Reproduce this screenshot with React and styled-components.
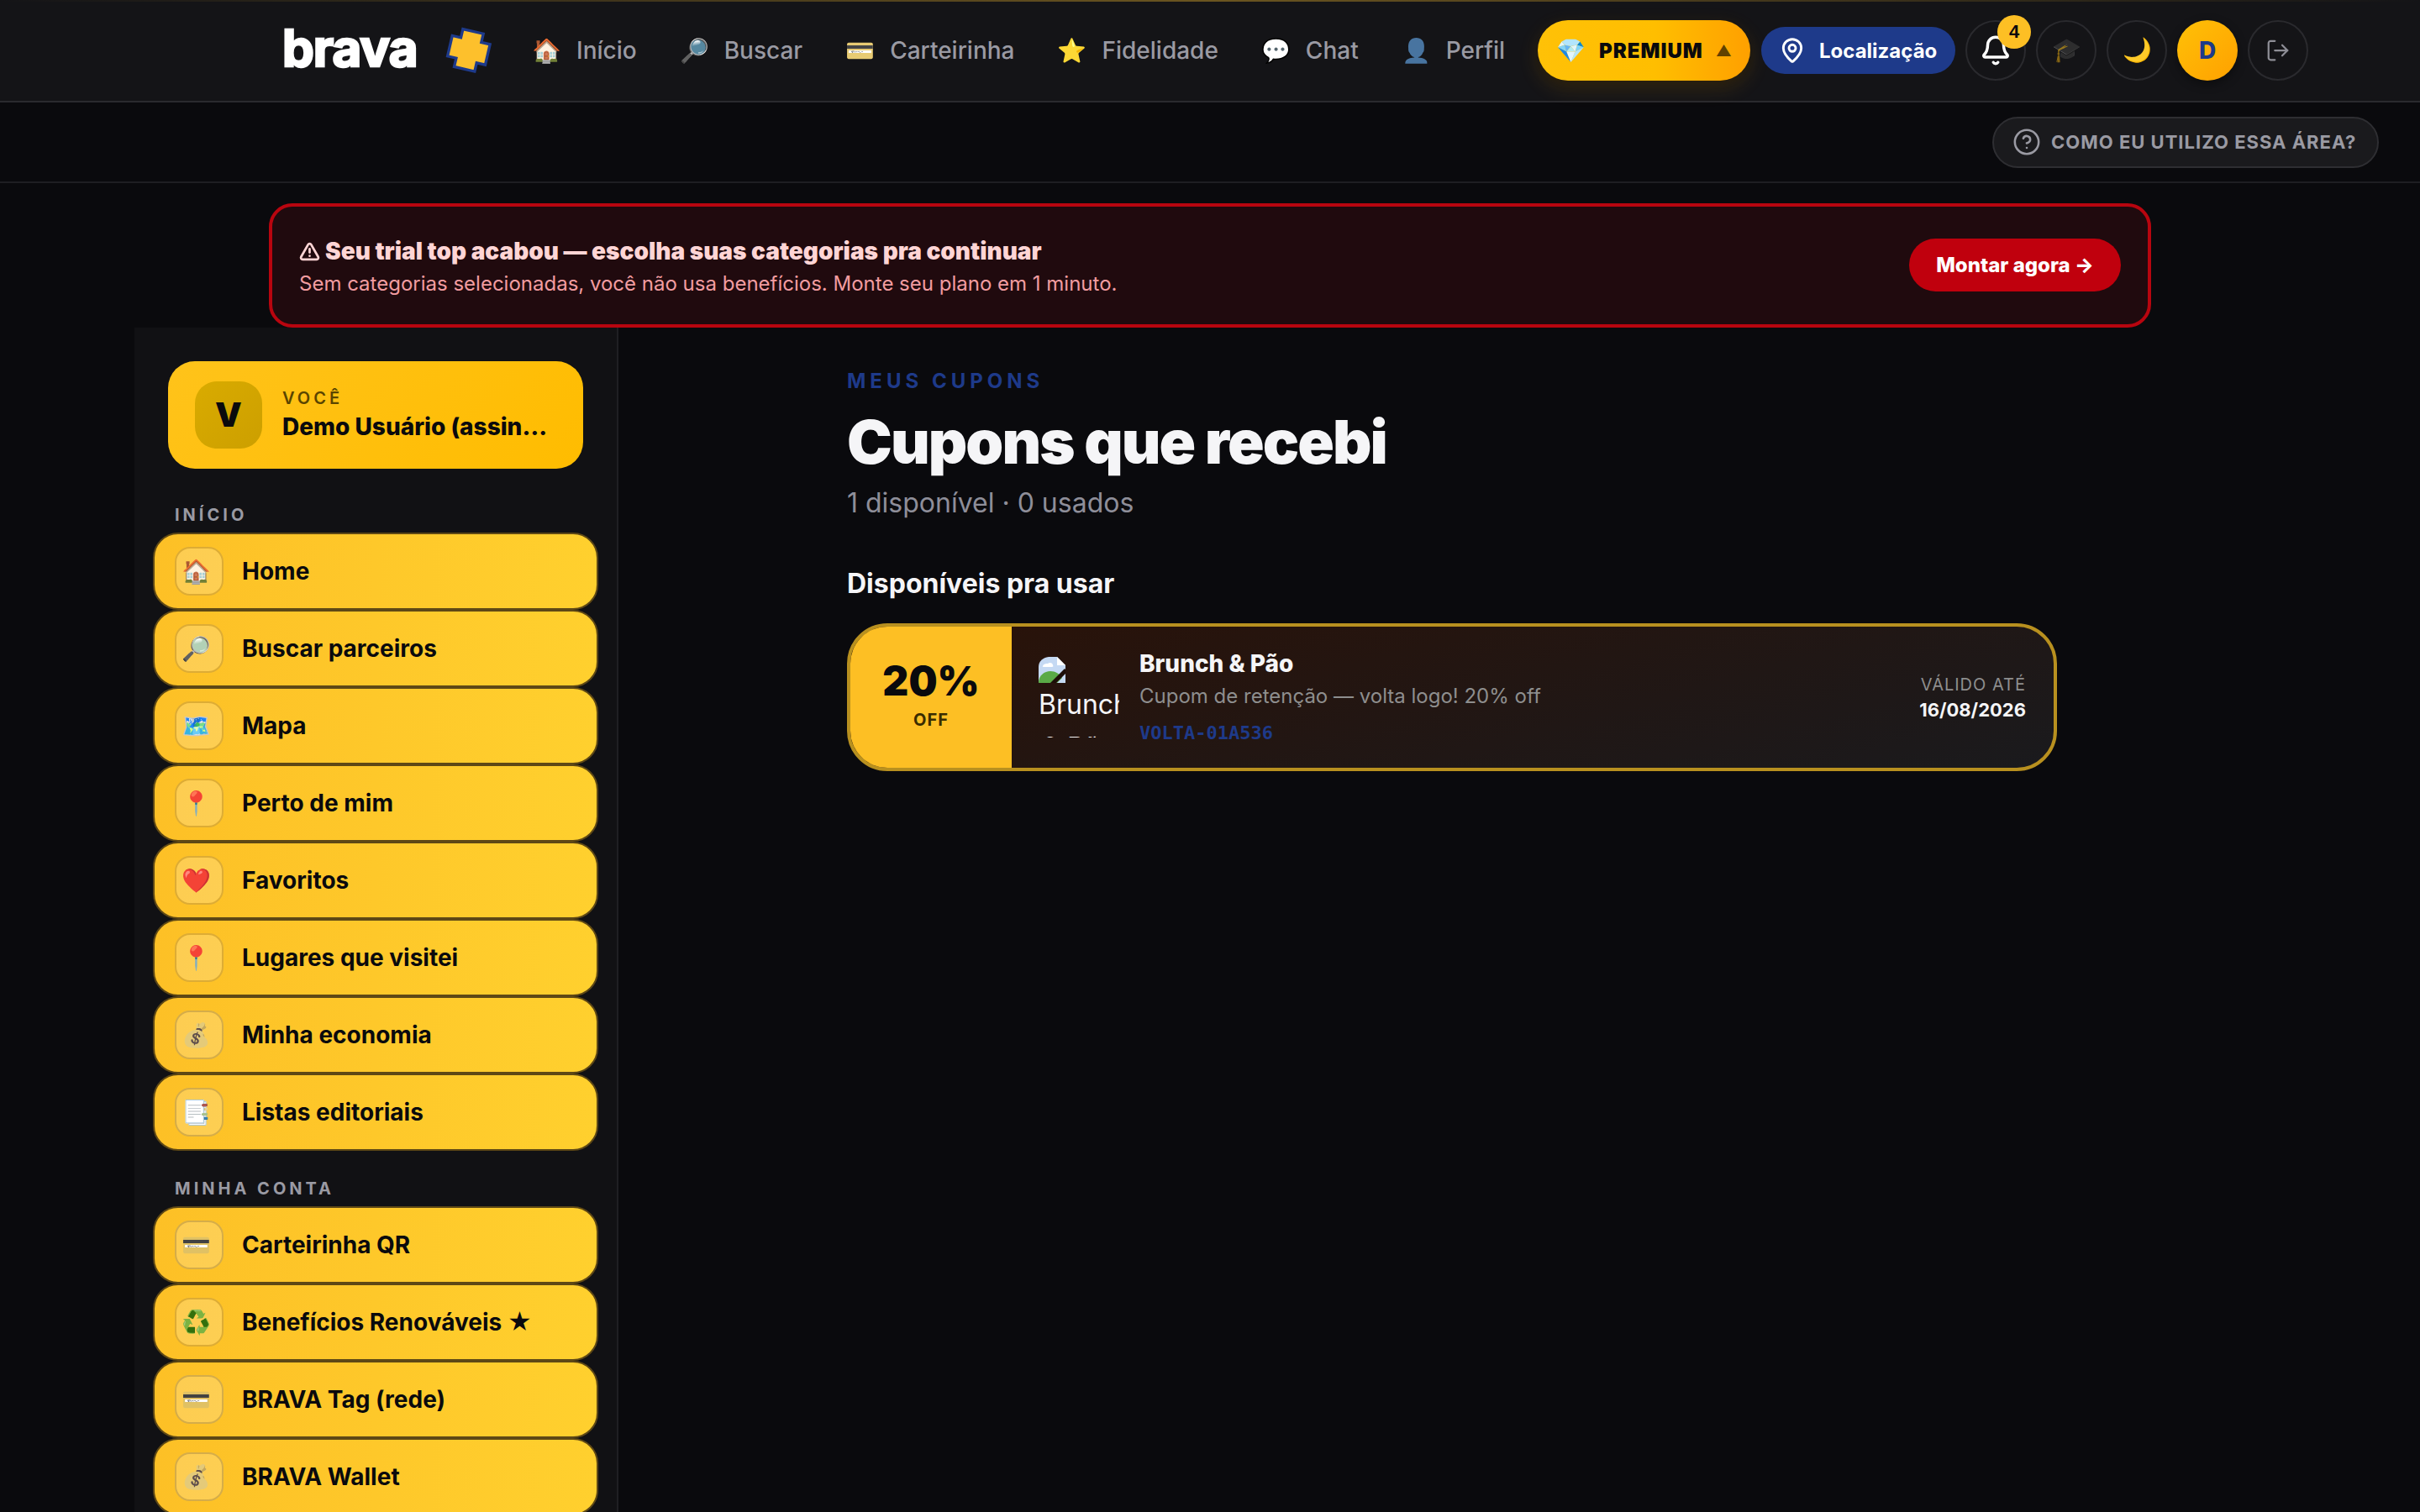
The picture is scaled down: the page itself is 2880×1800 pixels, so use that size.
import React from "react";
import styled, {createGlobalStyle} from "styled-components";
import {Bell, CircleHelp, LogOut, MapPin, TriangleAlert} from "lucide-react";

const colors = {
    bg: "#0a0a0d",
    panel: "#141417",
    line: "#2a2a2e",
    muted: "#9a9aa3",
    gold: "#ffc107",
    blue: "#1e3a8a",
    white: "#f5f5f7",
};

const topNav = [
    {icon: "🏠", label: "Início"},
    {icon: "🔎", label: "Buscar"},
    {icon: "💳", label: "Carteirinha", pale: true},
    {icon: "⭐", label: "Fidelidade"},
    {icon: "💬", label: "Chat"},
    {icon: "👤", label: "Perfil", pale: true},
];

const homeItems = [
    {icon: "🏠", label: "Home"},
    {icon: "🔎", label: "Buscar parceiros"},
    {icon: "🗺️", label: "Mapa"},
    {icon: "📍", label: "Perto de mim"},
    {icon: "❤️", label: "Favoritos"},
    {icon: "📍", label: "Lugares que visitei"},
    {icon: "💰", label: "Minha economia", pale: true},
    {icon: "📑", label: "Listas editoriais", pale: true},
];

const accountItems = [
    {icon: "💳", label: "Carteirinha QR", pale: true},
    {icon: "♻️", label: "Benefícios Renováveis ★"},
    {icon: "💳", label: "BRAVA Tag (rede)", pale: true},
    {icon: "💰", label: "BRAVA Wallet", pale: true},
];

const PlusMark = () => <PlusSvg viewBox="0 0 56 56">
    <path d="M15 4h26v11h11v26H41v11H15V41H4V15h11z" transform="rotate(13 28 28) scale(.96) translate(1 1)"
          fill="#fdc02c" stroke="#1e3a8a" strokeWidth="3.5"/>
</PlusSvg>;

const BrokenImage = () => <BrokenSvg viewBox="0 0 32 32">
    <path d="M0 31V12C0 5 5 1 12 0h10l10 10v21z" fill="#c5d9f3"/>
    <path d="M5 11c1-3 4-3 6-3 2-2 6-1 6 2 1 1 0 2-1 2H6c-1 0-2-1-1-1z" fill="#fff"/>
    <path d="M0 31c0-9 7-14 14-14 6 0 11 3 14 8l-6 6z" fill="#5aaa46"/>
    <path d="M22 0l10 10H22z" fill="#fff"/>
    <path d="M14 31L31 14l1 1v5L21 31z" fill="#1d0e08"/>
</BrokenSvg>;

const SideItem = ({icon, label, pale}) => <Item>
    <ItemIcon $pale={pale}>{icon}</ItemIcon>
    <span>{label}</span>
</Item>;

const App = () => <Page>
    <GlobalStyle/>
    <Header>
        <Logo>brava</Logo>
        <PlusMark/>
        <TopNav>
            {topNav.map(item => <NavLink key={item.label}>
                <NavEmoji $pale={item.pale}>{item.icon}</NavEmoji>
                {item.label}
            </NavLink>)}
        </TopNav>
        <PremiumButton>
            <GemEmoji>💎</GemEmoji>
            PREMIUM
            <Caret>▲</Caret>
        </PremiumButton>
        <LocationButton><MapPin size={32} strokeWidth={2.2}/>Localização</LocationButton>
        <RoundButton>
            <Bell size={38} strokeWidth={2.2} color="#ffffff"/>
            <Badge>4</Badge>
        </RoundButton>
        <RoundButton><DimEmoji>🎓</DimEmoji></RoundButton>
        <RoundButton><NavEmoji>🌙</NavEmoji></RoundButton>
        <AvatarButton>D</AvatarButton>
        <RoundButton><LogOut size={30} strokeWidth={1.8} color="#8e8e96"/></RoundButton>
    </Header>
    <SubBar>
        <HelpButton><CircleHelp size={34} strokeWidth={1.8}/>COMO EU UTILIZO ESSA ÁREA?</HelpButton>
    </SubBar>
    <BannerRow>
        <Banner>
            <div>
                <BannerTitle><TriangleAlert size={25} strokeWidth={2.6}/>Seu trial top acabou — escolha suas categorias pra continuar</BannerTitle>
                <BannerText>Sem categorias selecionadas, você não usa benefícios. Monte seu plano em 1 minuto.</BannerText>
            </div>
            <BannerButton>Montar agora →</BannerButton>
        </Banner>
    </BannerRow>
    <Body>
        <Sidebar>
            <ProfileCard>
                <ProfileAvatar>V</ProfileAvatar>
                <ProfileText>
                    <ProfileLabel>VOCÊ</ProfileLabel>
                    <ProfileName>Demo Usuário (assinante)</ProfileName>
                </ProfileText>
            </ProfileCard>
            <GroupLabel $first>INÍCIO</GroupLabel>
            <ItemList>
                {homeItems.map(item => <SideItem key={item.label} {...item}/>)}
            </ItemList>
            <GroupLabel>MINHA CONTA</GroupLabel>
            <ItemList>
                {accountItems.map(item => <SideItem key={item.label} {...item}/>)}
            </ItemList>
        </Sidebar>
        <Main>
            <Content>
                <Eyebrow>MEUS CUPONS</Eyebrow>
                <Title>Cupons que recebi</Title>
                <Subtitle>1 disponível · 0 usados</Subtitle>
                <SectionTitle>Disponíveis pra usar</SectionTitle>
                <Coupon>
                    <CouponStub>
                        <Discount>20%</Discount>
                        <DiscountOff>OFF</DiscountOff>
                    </CouponStub>
                    <CouponBody>
                        <PartnerImage>
                            <BrokenImage/>
                            Brunch & Pão
                        </PartnerImage>
                        <CouponInfo>
                            <PartnerName>Brunch & Pão</PartnerName>
                            <CouponDesc>Cupom de retenção — volta logo! 20% off</CouponDesc>
                            <CouponCode>VOLTA-01A536</CouponCode>
                        </CouponInfo>
                        <CouponExpiry>
                            <ExpiryLabel>VÁLIDO ATÉ</ExpiryLabel>
                            <ExpiryDate>16/08/2026</ExpiryDate>
                        </CouponExpiry>
                    </CouponBody>
                </Coupon>
            </Content>
        </Main>
    </Body>
</Page>;

const GlobalStyle = createGlobalStyle`
  * { box-sizing: border-box; }
  body {
    margin: 0;
    background: ${colors.bg};
    font-family: Inter, "Noto Sans", sans-serif;
    line-height: 1.6;
  }
`;

const Page = styled.div`
  height: 1800px;
  overflow: hidden;
  color: ${colors.white};
`;

const Header = styled.header`
  position: relative;
  height: 122px;
  display: flex;
  align-items: center;
  padding-left: 336px;
  background: ${colors.panel};
  border-bottom: 2px solid ${colors.line};

  &::before {
    content: "";
    position: absolute;
    top: 0;
    left: 0;
    right: 0;
    height: 2px;
    background: linear-gradient(90deg, #141417, #6b5520 50%, #141417);
  }
`;

const Logo = styled.div`
  width: 158px;
  font-size: 60px;
  font-weight: 700;
  line-height: 1;
  letter-spacing: -1px;
  color: #fff;
  -webkit-text-stroke: 2.5px #fff;
  margin-top: -6px;
`;

const PlusSvg = styled.svg`
  width: 56px;
  height: 56px;
  margin-left: 36px;
  flex-shrink: 0;
`;

const TopNav = styled.nav`
  display: flex;
  align-items: center;
  gap: 51px;
  margin-left: 47px;
`;

const NavLink = styled.a`
  display: flex;
  align-items: center;
  gap: 18px;
  font-size: 28px;
  font-weight: 500;
  color: ${colors.muted};
`;

const NavEmoji = styled.span`
  font-size: 28px;
  line-height: 1;
  filter: ${({$pale}) => $pale ? "saturate(0.45) brightness(1.05)" : "none"};
`;

const GemEmoji = styled(NavEmoji)`
  margin-right: 3px;
`;

const DimEmoji = styled(NavEmoji)`
  opacity: 0.55;
`;

const PremiumButton = styled.button`
  display: flex;
  align-items: center;
  gap: 12px;
  height: 72px;
  width: 253px;
  margin-left: 39px;
  padding: 0 22px;
  border: 0;
  border-radius: 36px;
  background: linear-gradient(90deg, #ffc107 0%, #ffbe00 55%, #ffa000 100%);
  box-shadow: 0 8px 24px rgba(255, 170, 0, 0.16), 0 4px 12px rgba(0, 0, 0, 0.4);
  font: 900 24px Inter, sans-serif;
  letter-spacing: 1px;
  color: #0a0a0d;
`;

const Caret = styled.span`
  margin-left: 3px;
  font-size: 18px;
  color: #5f4100;
`;

const LocationButton = styled.button`
  display: flex;
  align-items: center;
  gap: 16px;
  height: 56px;
  width: 231px;
  margin-left: 13px;
  padding: 0 0 0 21px;
  border: 0;
  border-radius: 28px;
  background: ${colors.blue};
  font: 700 24px Inter, sans-serif;
  color: #fff;
`;

const RoundButton = styled.button`
  position: relative;
  display: flex;
  align-items: center;
  justify-content: center;
  width: 72px;
  height: 72px;
  margin-left: 12px;
  padding: 0;
  border: 2px solid ${colors.line};
  border-radius: 50%;
  background: transparent;
`;

const AvatarButton = styled(RoundButton)`
  border: 0;
  background: linear-gradient(135deg, #ffc107, #ffa000);
  box-shadow: 0 4px 12px rgba(0, 0, 0, 0.4);
  font: 800 28px Inter, sans-serif;
  color: ${colors.blue};
`;

const Badge = styled.span`
  position: absolute;
  top: -8px;
  right: -8px;
  width: 40px;
  height: 40px;
  border-radius: 50%;
  background: #fdbf24;
  font-size: 22px;
  font-weight: 700;
  line-height: 40px;
  text-align: center;
  color: #0a0a0d;
`;

const SubBar = styled.div`
  height: 96px;
  display: flex;
  align-items: center;
  justify-content: flex-end;
  padding-right: 49px;
  border-bottom: 2px solid #1e1e22;
`;

const HelpButton = styled.button`
  display: flex;
  align-items: center;
  gap: 12px;
  height: 61px;
  width: 460px;
  padding: 0 0 0 22px;
  border: 2px solid #2e2e32;
  border-radius: 31px;
  background: #1a1a1d;
  font: 700 22px Inter, sans-serif;
  letter-spacing: 1px;
  white-space: nowrap;
  color: ${colors.muted};
`;

const BannerRow = styled.div`
  padding: 24px 320px 0;
`;

const Banner = styled.div`
  height: 148px;
  display: flex;
  align-items: center;
  justify-content: space-between;
  padding: 4px 32px 0 32px;
  border: 4px solid #b8050f;
  border-radius: 28px;
  background: #200a0e;
`;

const BannerTitle = styled.div`
  display: flex;
  align-items: center;
  gap: 6px;
  font-size: 28px;
  font-weight: 900;
  line-height: 38px;
  color: #ffd5d5;
`;

const BannerText = styled.div`
  margin-top: 2px;
  font-size: 24px;
  line-height: 36px;
  color: #f29ca0;
`;

const BannerButton = styled.button`
  height: 63px;
  width: 252px;
  margin-top: -6px;
  border: 0;
  border-radius: 32px;
  background: #c0000d;
  font: 800 24px Inter, sans-serif;
  color: #fff;
`;

const Body = styled.div`
  display: flex;
  padding: 0 160px;
`;

const Sidebar = styled.aside`
  flex: none;
  width: 576px;
  height: 1410px;
  padding: 40px 24px 0;
  background: #111114;
  border-right: 2px solid #1f1f23;
`;

const ProfileCard = styled.div`
  display: flex;
  align-items: center;
  gap: 24px;
  height: 128px;
  margin: 0 16px;
  padding: 0 32px;
  border-radius: 32px;
  background: linear-gradient(135deg, #ffc31a, #ffbc00);
`;

const ProfileAvatar = styled.div`
  flex: 0 0 80px;
  height: 80px;
  border-radius: 26px;
  background: linear-gradient(135deg, #d9ab00, #cc9f00);
  font-size: 40px;
  font-weight: 900;
  line-height: 80px;
  text-align: center;
  color: #0a0a0d;
`;

const ProfileText = styled.div`
  flex: 1;
  min-width: 0;
`;

const ProfileLabel = styled.div`
  font-size: 20px;
  font-weight: 600;
  line-height: 28px;
  letter-spacing: 4px;
  color: #5a4500;
`;

const ProfileName = styled.div`
  font-size: 28px;
  font-weight: 800;
  line-height: 40px;
  white-space: nowrap;
  overflow: hidden;
  text-overflow: ellipsis;
  color: #0a0a0d;
`;

const GroupLabel = styled.div`
  height: 32px;
  margin: ${({$first}) => $first ? "39px" : "29px"} 0 5px 24px;
  font-size: 20px;
  font-weight: 700;
  line-height: 32px;
  letter-spacing: 4px;
  color: ${colors.muted};
`;

const ItemList = styled.div`
  display: flex;
  flex-direction: column;
  margin: 0 -2px;
`;

const Item = styled.a`
  display: flex;
  align-items: center;
  gap: 22px;
  height: 92px;
  padding: 0 24px;
  border: 2px solid #5e4815;
  border-radius: 30px;
  background: linear-gradient(90deg, #fdc026, #ffd02e);
  font-size: 28px;
  font-weight: 700;
  color: #0a0a0d;
`;

const ItemIcon = styled.span`
  flex: 0 0 58px;
  height: 58px;
  display: flex;
  align-items: center;
  justify-content: center;
  padding-right: 8px;
  border: 2px solid rgba(160, 110, 0, 0.35);
  border-radius: 18px;
  background: rgba(255, 255, 255, 0.2);
  font-size: 28px;
  line-height: 1;
  filter: ${({$pale}) => $pale ? "saturate(0.5)" : "none"};
`;

const Main = styled.main`
  flex: 1;
  display: flex;
  justify-content: center;
  padding-top: 45px;
`;

const Content = styled.div`
  width: 1440px;
`;

const Eyebrow = styled.div`
  font-size: 24px;
  font-weight: 700;
  line-height: 38px;
  letter-spacing: 5px;
  color: ${colors.blue};
`;

const Title = styled.h1`
  margin: 13px 0 0;
  font-size: 72px;
  font-weight: 900;
  line-height: 79px;
  letter-spacing: -1.9px;
  color: ${colors.white};
`;

const Subtitle = styled.div`
  margin-top: 8px;
  font-size: 32px;
  line-height: 51px;
  color: #8e8e99;
`;

const SectionTitle = styled.h2`
  margin: 45px 0 0;
  font-size: 32px;
  font-weight: 700;
  line-height: 51px;
  color: ${colors.white};
`;

const Coupon = styled.div`
  display: flex;
  height: 176px;
  margin-top: 22px;
  border: 4px solid #b8901f;
  border-radius: 48px;
  overflow: hidden;
  background: linear-gradient(165deg, #2a1208, #1a1a1d);
`;

const CouponStub = styled.div`
  flex: 0 0 192px;
  display: flex;
  flex-direction: column;
  align-items: center;
  justify-content: center;
  padding-bottom: 4px;
  background: #fdbf24;
`;

const Discount = styled.div`
  margin-top: -3px;
  font-size: 48px;
  font-weight: 900;
  line-height: 58px;
  color: #0a0a0d;
`;

const DiscountOff = styled.div`
  margin-top: 3px;
  font-size: 20px;
  font-weight: 700;
  line-height: 28px;
  letter-spacing: 1px;
  color: #3a2c00;
`;

const CouponBody = styled.div`
  flex: 1;
  display: flex;
  align-items: center;
  gap: 24px;
  padding: 0 33px 0 32px;
`;

const PartnerImage = styled.div`
  flex: 0 0 96px;
  height: 96px;
  overflow: hidden;
  font-size: 32px;
  line-height: 51px;
  text-align: center;
  color: ${colors.white};
`;

const BrokenSvg = styled.svg`
  display: block;
  width: 32px;
  height: 32px;
  margin-bottom: -1px;
`;

const CouponInfo = styled.div`
  flex: 1;
`;

const PartnerName = styled.div`
  font-size: 28px;
  font-weight: 800;
  line-height: 36px;
  color: ${colors.white};
`;

const CouponDesc = styled.div`
  margin-top: 3px;
  font-size: 24px;
  line-height: 36px;
  color: #8e8e8e;
`;

const CouponCode = styled.div`
  margin-top: 11px;
  font-family: "DejaVu Sans Mono", monospace;
  font-size: 22px;
  font-weight: 700;
  line-height: 30px;
  color: ${colors.blue};
`;

const CouponExpiry = styled.div`
  text-align: right;
`;

const ExpiryLabel = styled.div`
  font-size: 20px;
  line-height: 30px;
  letter-spacing: 1px;
  color: #8e8e8e;
`;

const ExpiryDate = styled.div`
  font-size: 22px;
  font-weight: 700;
  line-height: 30px;
  color: ${colors.white};
`;

export default App;
